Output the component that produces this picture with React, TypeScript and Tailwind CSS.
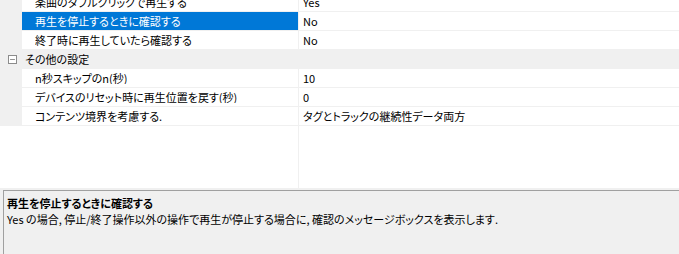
import { Minus } from "lucide-react";

type Row =
  | { kind: "prop"; label: string; value: string; selected?: boolean }
  | { kind: "cat"; label: string };

const rows: Row[] = [
  { kind: "prop", label: "楽曲のダブルクリックで再生する", value: "Yes" },
  { kind: "prop", label: "再生を停止するときに確認する", value: "No", selected: true },
  { kind: "prop", label: "終了時に再生していたら確認する", value: "No" },
  { kind: "cat", label: "その他の設定" },
  { kind: "prop", label: "n秒スキップのn(秒)", value: "10" },
  { kind: "prop", label: "デバイスのリセット時に再生位置を戻す(秒)", value: "0" },
  { kind: "prop", label: "コンテンツ境界を考慮する.", value: "タグとトラックの継続性データ両方" },
];

function PropRow({ label, value, selected }: { label: string; value: string; selected?: boolean }) {
  return (
    <div className="flex h-[19px] shrink-0 border-b border-[#f0f0f0]">
      <div className="w-[22px] bg-[#f0f0f0]" />
      <div
        className={
          selected
            ? "w-[276px] pl-[13px] flex items-center bg-[#0078d7] text-white"
            : "w-[276px] pl-[13px] flex items-center text-black"
        }
      >
        <span className="truncate">{label}</span>
      </div>
      <div className="w-px bg-[#f0f0f0]" />
      <div className="flex-1 pl-[4px] flex items-center text-black">{value}</div>
    </div>
  );
}

function CatRow({ label }: { label: string }) {
  return (
    <div className="flex h-[19px] shrink-0 items-center bg-[#f0f0f0] border-b border-[#f0f0f0]">
      <div className="w-[25px] flex items-center pl-[8px]">
        {/* 折りたたみボタン */}
        <div className="w-[9px] h-[9px] border border-[#8c8c8c] bg-white flex items-center justify-center">
          <Minus size={7} strokeWidth={2} className="text-[#444]" />
        </div>
      </div>
      <span className="text-black">{label}</span>
    </div>
  );
}

export default function App() {
  return (
    <div className="w-[679px] h-[254px] overflow-hidden bg-white flex flex-col text-[11px] leading-none font-['Noto_Sans_CJK_JP','Noto_Sans',sans-serif] [font-feature-settings:'palt']">
      {/* プロパティグリッド */}
      <div className="h-[188px] shrink-0 flex flex-col overflow-hidden">
        <div className="flex flex-col -mt-[7px]">
          {rows.map((r, i) =>
            r.kind === "cat" ? (
              <CatRow key={i} label={r.label} />
            ) : (
              <PropRow key={i} label={r.label} value={r.value} selected={r.selected} />
            )
          )}
        </div>
        <div className="flex-1 flex">
          <div className="w-[298px]" />
          <div className="w-px bg-[#f0f0f0]" />
          <div className="flex-1" />
        </div>
      </div>

      {/* 説明パネル */}
      <div className="flex-1 bg-[#f0f0f0] pt-[2px] pl-[3px] flex">
        <div className="flex-1 border-t border-l border-[#a0a0a0] pl-[3px] pt-[4px] flex flex-col">
          <div className="font-bold text-black leading-[16px]">再生を停止するときに確認する</div>
          <div className="text-black leading-[16px]">
            Yes の場合, 停止/終了操作以外の操作で再生が停止する場合に, 確認のメッセージボックスを表示します.
          </div>
        </div>
      </div>
    </div>
  );
}
